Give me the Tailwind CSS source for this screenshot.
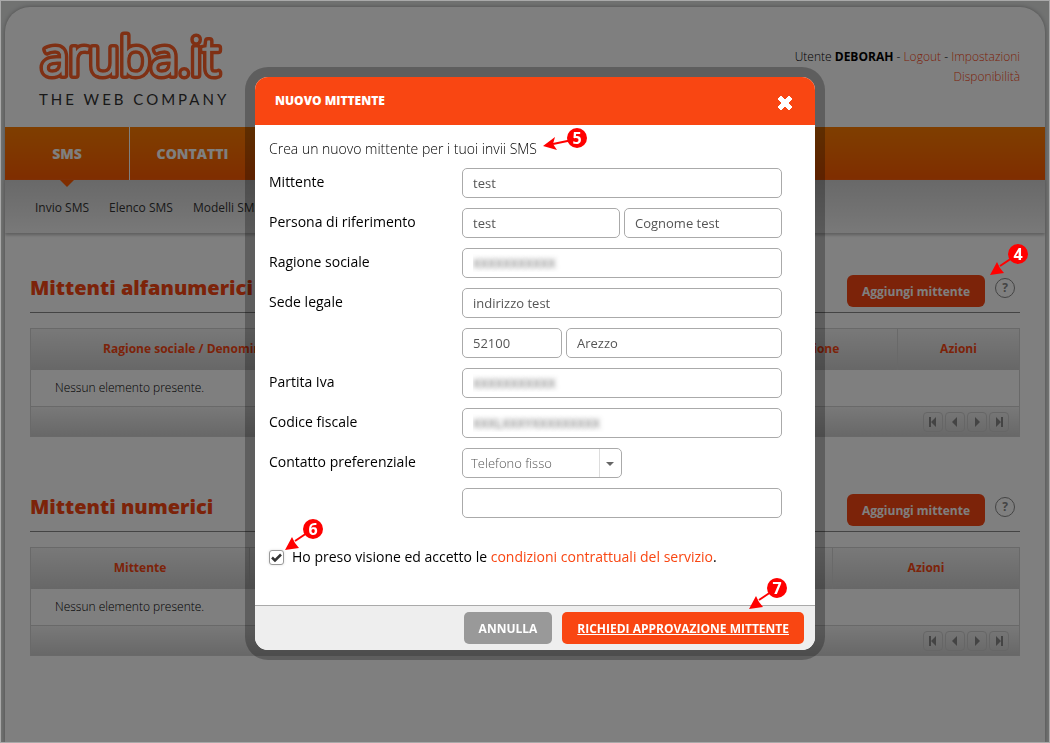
<!DOCTYPE html>
<html lang="it">
<head>
<meta charset="utf-8">
<title>Nuovo mittente</title>
<script src="https://cdn.jsdelivr.net/npm/@tailwindcss/browser@4"></script>
</head>
<body class="bg-[#e2e4e3] font-['Open_Sans','Noto_Sans',sans-serif] text-black">
<svg class="hidden">
  <symbol id="arrow" viewBox="0 0 40 32"><path d="M29 10 11 22" stroke="red" stroke-width="2"/><path d="M1 31 8 18 11 24 15 29Z" fill="red"/><circle cx="29" cy="10" r="10" fill="red"/></symbol>
  <symbol id="first" viewBox="0 0 10 10"><path d="M1 0H3V10H1ZM3 5 8 0V10Z" fill="currentColor"/></symbol>
  <symbol id="prev" viewBox="0 0 10 10"><path d="M2 5 7 0V10Z" fill="currentColor"/></symbol>
  <symbol id="next" viewBox="0 0 10 10"><path d="M8 5 3 0V10Z" fill="currentColor"/></symbol>
  <symbol id="last" viewBox="0 0 10 10"><path d="M9 0H7V10H9ZM7 5 2 0V10Z" fill="currentColor"/></symbol>
</svg>

<div class="min-h-screen px-[5px] pt-[7px]">
  <div class="min-h-[736px] rounded-t-[25px] bg-white shadow-[0_0_4px_#999]">
    <header class="flex h-[120px] items-start justify-between pl-[34px] pr-[25px]">
      <a href="#" class="mt-[18px] block" aria-label="aruba.it the web company">
        <svg width="200" height="82" viewBox="0 0 200 82" class="block overflow-visible">
          <g font-family="Open Sans" font-size="52" font-weight="300" stroke-linejoin="round" stroke-linecap="round">
            <text x="2" y="50" fill="#ff6028" stroke="#ff6028" stroke-width="8">aruba.it</text>
            <text x="2" y="50" fill="#fff" stroke="#fff" stroke-width="1">aruba.it</text>
          </g>
          <text x="0" y="80" font-family="Lato" font-size="15" fill="#333" class="tracking-[3px]">THE WEB COMPANY</text>
        </svg>
      </a>
      <div class="mt-10 text-right text-xs leading-5 font-light">
        <p>Utente <strong class="font-bold">DEBORAH</strong> - <a href="#" class="text-[#f94612]">Logout</a> - <a href="#" class="text-[#f94612]">Impostazioni</a></p>
        <p><a href="#" class="text-[#f94612]">Disponibilità</a></p>
      </div>
    </header>

    <nav class="flex h-[53px] bg-linear-to-b from-[#ff7d00] to-[#ff5a00] text-sm font-extrabold text-white">
      <a href="#" class="relative flex w-[125px] items-center justify-center border-r border-white">SMS
        <svg class="absolute top-full left-[55px]" width="14" height="7" viewBox="0 0 14 7"><path d="M0 0H14L7 7Z" fill="#ff5a00"/></svg>
      </a>
      <a href="#" class="flex w-[125px] items-center justify-center">CONTATTI</a>
    </nav>
    <nav class="flex h-[53px] items-center gap-5 bg-linear-to-b from-[#d2d2d2] to-[#f2f2f2] pt-[2px] pl-[30px] text-xs text-[#333] shadow-[0_2px_3px_#bbb]">
      <a href="#">Invio SMS</a><a href="#">Elenco SMS</a><a href="#">Modelli SMS</a>
    </nav>

    <main class="px-[25px] pt-9">
      <section class="h-[219px]">
        <div class="flex h-11 items-start border-b border-[#888]">
          <h2 class="grow text-xl leading-[38px] font-extrabold text-[#f94612]">Mittenti alfanumerici</h2>
          <button class="mt-[6px] h-8 w-[138px] rounded-md bg-[#f94612] pt-[2px] text-xs font-bold text-white">Aggiungi mittente</button>
          <button class="mt-[9px] mr-[5px] ml-[10px] size-5 rounded-full border border-[#888] text-xs leading-none font-bold text-[#888]">?</button>
        </div>
        <table class="mt-[15px] w-full table-fixed border-collapse border border-[#d2d2d2] text-xs">
          <thead><tr class="h-[41px] bg-linear-to-b from-[#f2f2f2] to-[#cfcfcf] text-[#f94612]">
            <th class="w-[342px] font-bold">Ragione sociale / Denominazione</th><th></th><th class="w-[232px] border-r border-[#d2d2d2] font-bold">Stato approvazione</th><th class="w-[122px] font-bold">Azioni</th>
          </tr></thead>
          <tbody><tr class="h-[37px] border-b border-[#d2d2d2]"><td colspan="4" class="pl-6 font-light">Nessun elemento presente.</td></tr></tbody>
          <tfoot><tr class="h-[30px] bg-linear-to-b from-[#f2f2f2] to-[#cfcfcf]"><td colspan="4" class="pr-[10px]"><div class="flex justify-end gap-[2px] text-[#888]">
            <button aria-label="Prima" class="flex size-5 items-center justify-center rounded-sm border border-[#ccc]"><svg class="size-[10px]"><use href="#first"/></svg></button>
            <button aria-label="Precedente" class="flex size-5 items-center justify-center rounded-sm border border-[#ccc]"><svg class="size-[10px]"><use href="#prev"/></svg></button>
            <button aria-label="Successiva" class="flex size-5 items-center justify-center rounded-sm border border-[#ccc]"><svg class="size-[10px]"><use href="#next"/></svg></button>
            <button aria-label="Ultima" class="flex size-5 items-center justify-center rounded-sm border border-[#ccc]"><svg class="size-[10px]"><use href="#last"/></svg></button>
          </div></td></tr></tfoot>
        </table>
      </section>
      <section>
        <div class="flex h-11 items-start border-b border-[#888]">
          <h2 class="grow text-xl leading-[38px] font-extrabold text-[#f94612]">Mittenti numerici</h2>
          <button class="mt-[6px] h-8 w-[138px] rounded-md bg-[#f94612] pt-[2px] text-xs font-bold text-white">Aggiungi mittente</button>
          <button class="mt-[9px] mr-[5px] ml-[10px] size-5 rounded-full border border-[#888] text-xs leading-none font-bold text-[#888]">?</button>
        </div>
        <table class="mt-[15px] w-full table-fixed border-collapse border border-[#d2d2d2] text-xs">
          <thead><tr class="h-[41px] bg-linear-to-b from-[#f2f2f2] to-[#cfcfcf] text-[#f94612]">
            <th class="w-[219px] border-r border-[#d2d2d2] font-bold">Mittente</th><th class="border-r border-[#d2d2d2]"></th><th class="w-[187px] font-bold">Azioni</th>
          </tr></thead>
          <tbody><tr class="h-[37px] border-b border-[#d2d2d2]"><td colspan="3" class="pl-6 font-light">Nessun elemento presente.</td></tr></tbody>
          <tfoot><tr class="h-[30px] bg-linear-to-b from-[#f2f2f2] to-[#cfcfcf]"><td colspan="3" class="pr-[10px]"><div class="flex justify-end gap-[2px] text-[#888]">
            <button aria-label="Prima" class="flex size-5 items-center justify-center rounded-sm border border-[#ccc]"><svg class="size-[10px]"><use href="#first"/></svg></button>
            <button aria-label="Precedente" class="flex size-5 items-center justify-center rounded-sm border border-[#ccc]"><svg class="size-[10px]"><use href="#prev"/></svg></button>
            <button aria-label="Successiva" class="flex size-5 items-center justify-center rounded-sm border border-[#ccc]"><svg class="size-[10px]"><use href="#next"/></svg></button>
            <button aria-label="Ultima" class="flex size-5 items-center justify-center rounded-sm border border-[#ccc]"><svg class="size-[10px]"><use href="#last"/></svg></button>
          </div></td></tr></tfoot>
        </table>
      </section>
    </main>
  </div>
</div>

<div class="fixed inset-0 flex items-start justify-center border border-[#a9a9a9] bg-black/50 bg-clip-padding pt-[76px] pl-5">
  <form role="dialog" aria-labelledby="dlg" class="relative w-[560px] rounded-[13px] bg-white shadow-[0_0_0_10px_rgba(0,0,0,0.26)]">
    <header class="flex h-12 items-center justify-between rounded-t-[13px] bg-[#f94612] pr-[22px] pl-5 text-white">
      <h1 id="dlg" class="text-xs font-extrabold">NUOVO MITTENTE</h1>
      <button type="button" aria-label="Chiudi" class="mt-1"><svg width="16" height="16" viewBox="0 0 16 16" class="block"><path d="M1 4 4 1 8 5 12 1 15 4 11 8 15 12 12 15 8 11 4 15 1 12 5 8Z" fill="#fff" stroke="#fff" stroke-width="1" stroke-linejoin="round"/></svg></button>
    </header>
    <div class="h-[480px] pt-[14px] pr-[33px] pl-[14px] text-sm">
      <p class="mb-[9px] leading-5 font-light">Crea un nuovo mittente per i tuoi invii SMS</p>
      <div class="grid grid-cols-[193px_1fr] gap-y-[10px] text-[13px] text-[#555]">
        <label for="a" class="text-sm leading-7 text-black">Mittente</label>
        <input id="a" value="test" class="h-[30px] w-full rounded-[5px] border border-[#aaa] px-[10px]">
        <label for="b" class="text-sm leading-7 text-black">Persona di riferimento</label>
        <div class="flex gap-1"><input id="b" value="test" class="h-[30px] w-0 grow rounded-[5px] border border-[#aaa] px-[10px]"><input aria-label="Cognome" value="Cognome test" class="h-[30px] w-0 grow rounded-[5px] border border-[#aaa] px-[10px]"></div>
        <label for="c" class="text-sm leading-7 text-black">Ragione sociale</label>
        <input id="c" value="XXXXXXXXXXX" class="h-[30px] w-full rounded-[5px] border border-[#aaa] px-[10px] text-transparent [text-shadow:0_0_5px_#555]">
        <label for="d" class="text-sm leading-7 text-black">Sede legale</label>
        <input id="d" value="indirizzo test" class="h-[30px] w-full rounded-[5px] border border-[#aaa] px-[10px]">
        <div class="col-start-2 flex gap-1"><input aria-label="CAP" value="52100" class="h-[30px] w-[100px] rounded-[5px] border border-[#aaa] px-[10px]"><input aria-label="Città" value="Arezzo" class="h-[30px] w-0 grow rounded-[5px] border border-[#aaa] px-[10px]"></div>
        <label for="e" class="text-sm leading-7 text-black">Partita Iva</label>
        <input id="e" value="XXXXXXXXXXX" class="h-[30px] w-full rounded-[5px] border border-[#aaa] px-[10px] text-transparent [text-shadow:0_0_5px_#555]">
        <label for="f" class="text-sm leading-7 text-black">Codice fiscale</label>
        <input id="f" value="XXXLXXXYXXXXXXXXX" class="h-[30px] w-full rounded-[5px] border border-[#aaa] px-[10px] text-transparent [text-shadow:0_0_5px_#555]">
        <label for="g" class="text-sm leading-7 text-black">Contatto preferenziale</label>
        <div class="relative w-40">
          <select id="g" class="h-[30px] w-full appearance-none rounded-[5px] border border-[#aaa] px-2 font-light"><option>Telefono fisso</option></select>
          <svg class="pointer-events-none absolute top-px right-px" width="22" height="28" viewBox="0 0 22 28"><path d="M.5 0V28" stroke="#ddd"/><path d="M7 13H15L11 17Z" fill="#666"/></svg>
        </div>
        <input aria-label="Recapito" class="col-start-2 h-[30px] w-full rounded-[5px] border border-[#aaa] px-[10px]">
      </div>
      <div class="mt-7 flex items-center leading-[22px]">
        <span class="relative mr-2 size-[15px]"><input id="ok" type="checkbox" checked class="block size-[15px] appearance-none rounded-[3px] border border-[#999] bg-white shadow-[0_0_3px_#ddd]"><svg class="pointer-events-none absolute inset-0" width="15" height="15" viewBox="0 0 15 15"><path d="M3 7.500 6 10.500 12 4.500" fill="none" stroke="#333" stroke-width="2.500"/></svg></span>
        <p><label for="ok">Ho preso visione ed accetto le</label> <a href="#" class="text-[#f94612]">condizioni contrattuali del servizio</a>.</p>
      </div>
    </div>
    <footer class="flex h-[45px] items-center justify-end gap-[10px] rounded-b-[13px] border-t border-[#aaa] bg-[#eee] pr-[11px] text-xs font-bold text-white">
      <button type="button" class="h-8 rounded-[5px] bg-[#999] px-[15px] pt-[2px]">ANNULLA</button>
      <button class="h-8 rounded-[5px] bg-[#f94612] px-[15px] pt-[2px] underline">RICHIEDI APPROVAZIONE MITTENTE</button>
    </footer>
    <div class="pointer-events-none absolute top-[51px] left-[288px] text-white">
      <svg width="45" height="24" viewBox="0 0 45 24"><path d="M10 16 34 11" stroke="red" stroke-width="2"/><path d="M0 18 12 9 10 16 14 22Z" fill="red"/><circle cx="34" cy="10" r="10" fill="red"/><text x="34" y="16" text-anchor="middle" font-size="16" font-weight="700" fill="#fff">5</text></svg>
    </div>
    <div class="pointer-events-none absolute top-[442px] left-[29px]"><svg width="40" height="32"><use href="#arrow"/><text x="29" y="16" text-anchor="middle" font-size="16" font-weight="700" fill="#fff">6</text></svg></div>
    <div class="pointer-events-none absolute top-[501px] left-[493px]"><svg width="40" height="32"><use href="#arrow"/><text x="29" y="16" text-anchor="middle" font-size="16" font-weight="700" fill="#fff">7</text></svg></div>
  </form>
  <div class="pointer-events-none absolute top-[243px] right-[20px]"><svg width="40" height="32"><use href="#arrow"/><text x="29" y="16" text-anchor="middle" font-size="16" font-weight="700" fill="#fff">4</text></svg></div>
</div>
</body>
</html>
